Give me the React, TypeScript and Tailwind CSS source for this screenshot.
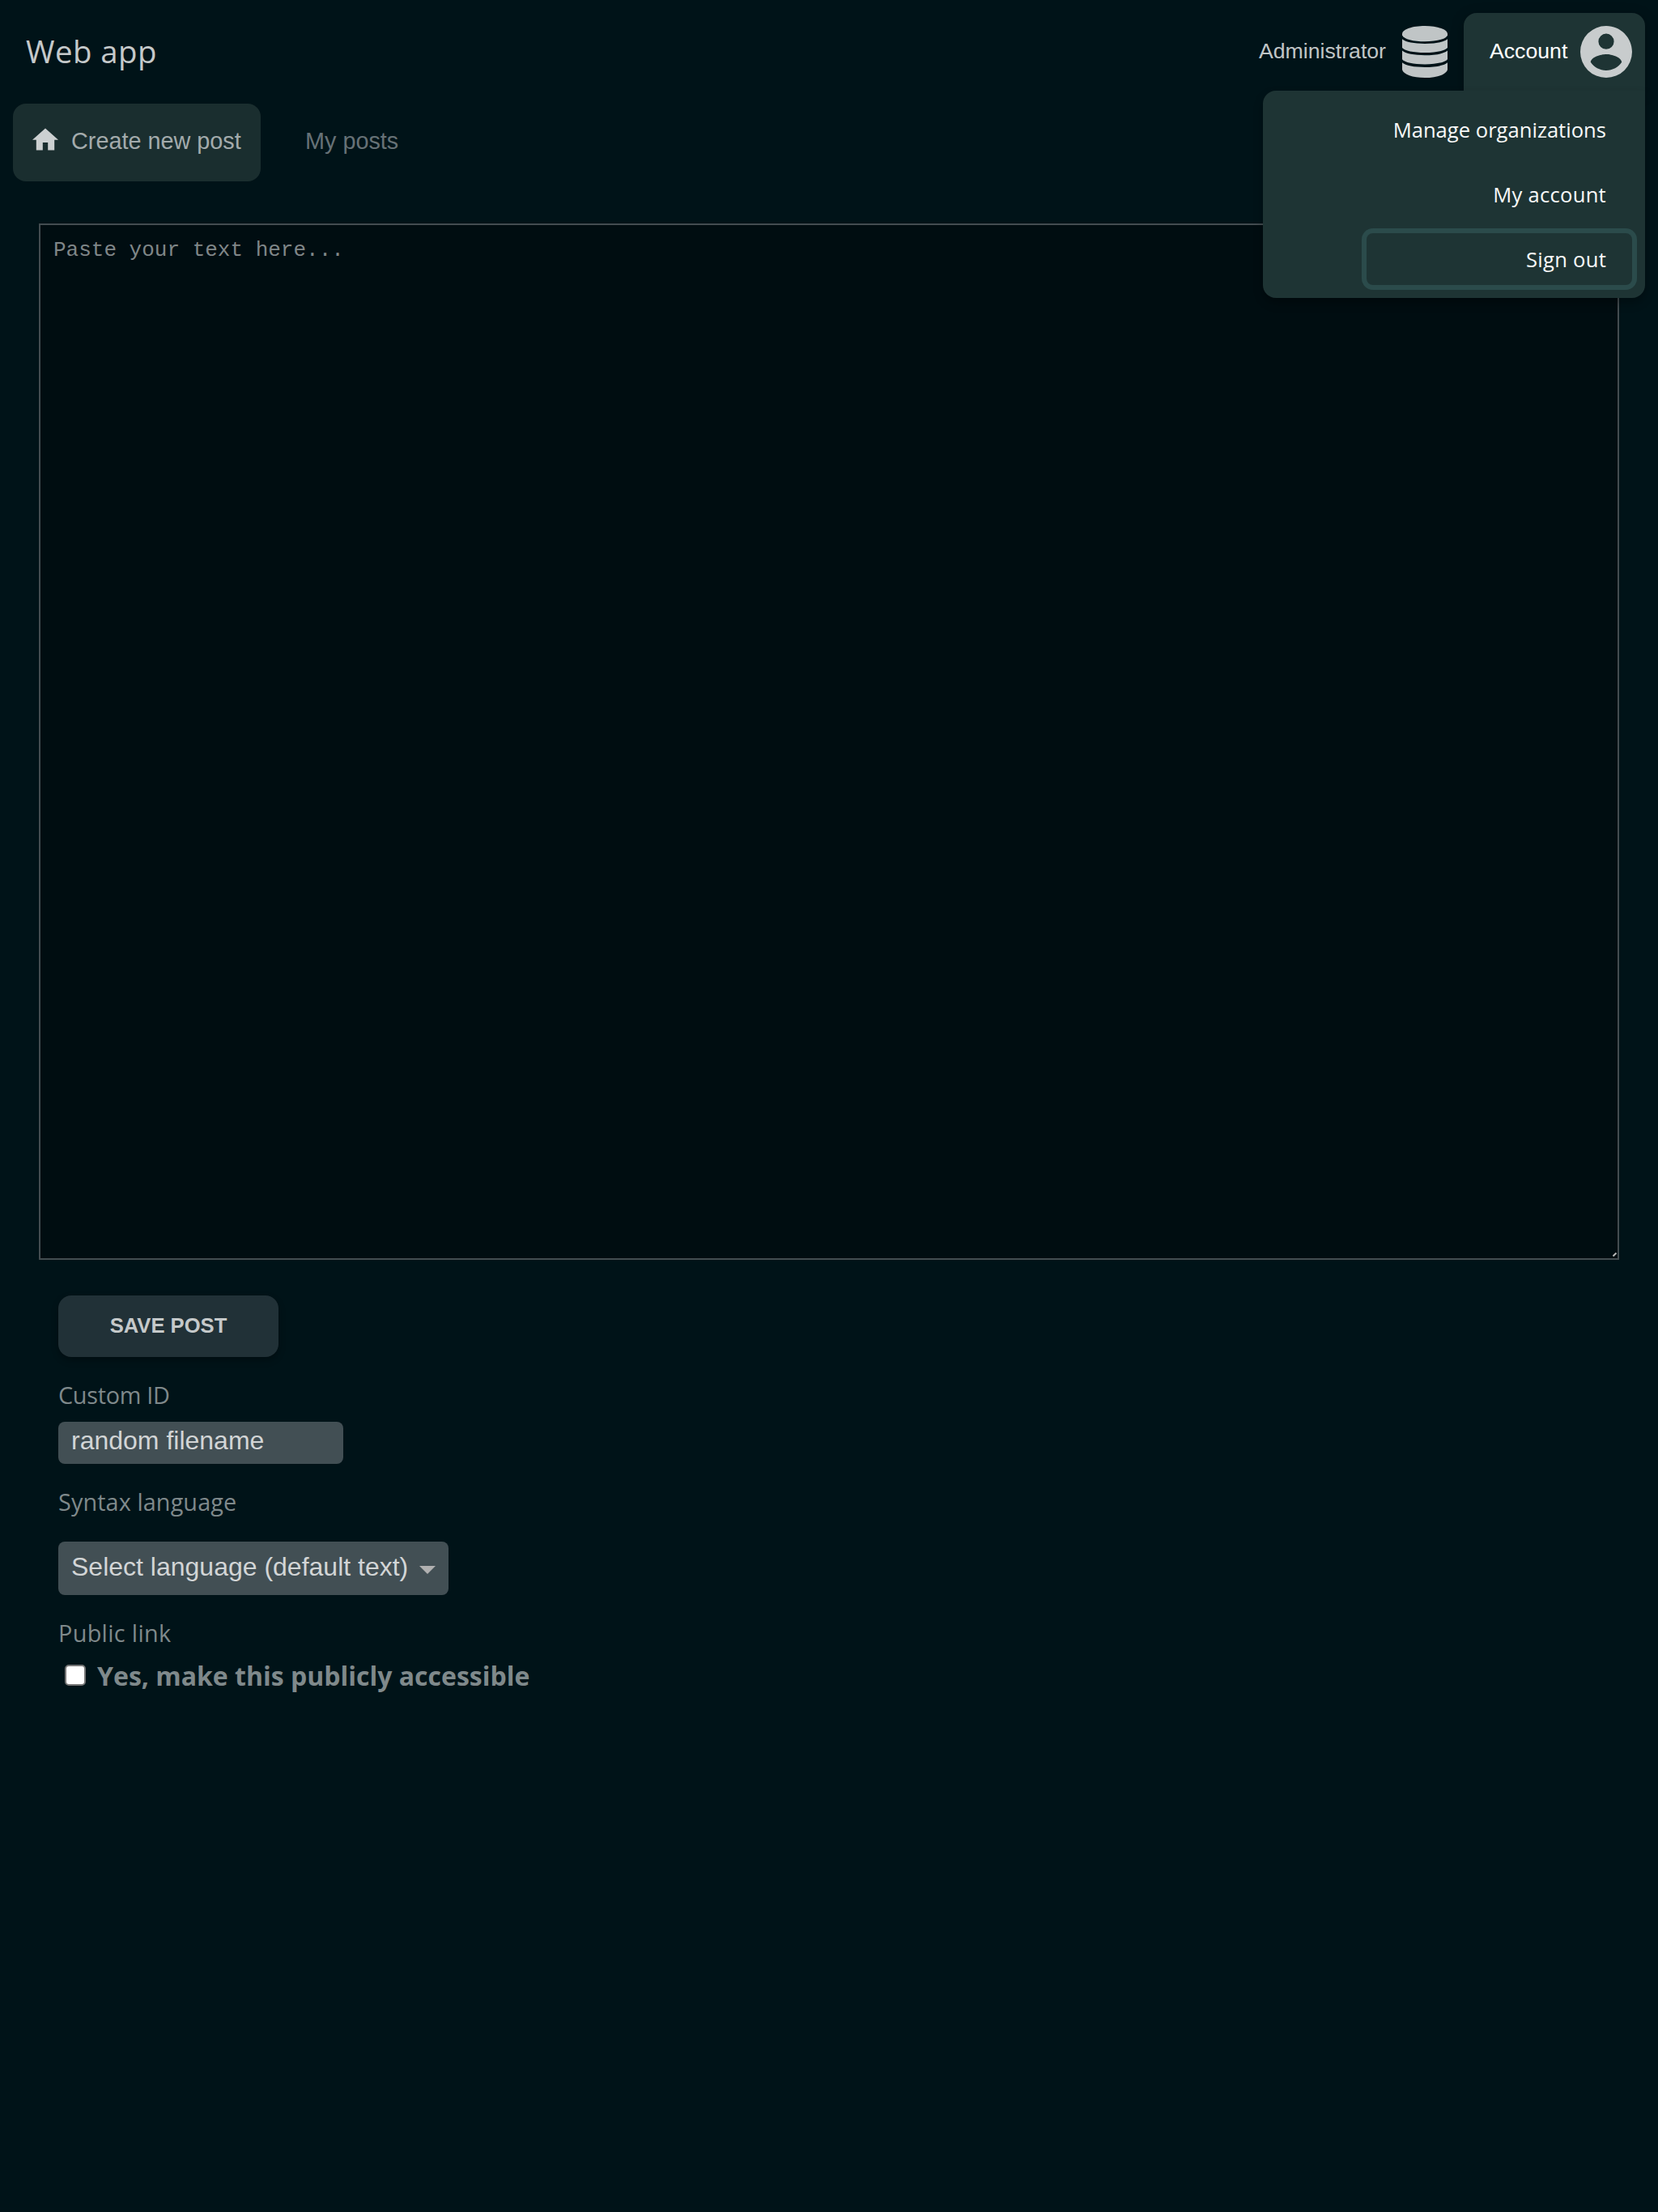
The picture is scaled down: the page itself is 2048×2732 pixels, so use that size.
import React from "react";

const DatabaseIcon = () => (
  <svg className="h-16 w-14 shrink-0" viewBox="0 0 56 64" fill="currentColor">
    <path d="M28 0C43 0 56 4 56 10V11.500C54 16.500 42 19.300 28 19.300S2 16.500 0 11.500V10C0 4 13 0 28 0Z" />
    <path d="M0 16.300C4 20 15 21.900 28 21.900S52 20 56 16.300V27C53 30.800 42 33 28 33S3 30.800 0 27Z" />
    <path d="M0 30.600C4 34.300 15 36.300 28 36.300S52 34.300 56 30.600V41.300C53 45.200 42 47.400 28 47.400S3 45.200 0 41.300Z" />
    <path d="M0 45.200C4 49 15 50.900 28 50.900S52 49 56 45.200V54C54.500 60 43 64 28 64S1.500 60 0 54Z" />
  </svg>
);

const AccountIcon = () => (
  <svg className="size-16 shrink-0" viewBox="2 2 20 20" fill="currentColor">
    <path d="M12,19.2C9.5,19.2 7.29,17.92 6,16C6.03,14 10,12.9 12,12.9C14,12.9 17.97,14 18,16C16.71,17.92 14.5,19.2 12,19.2M12,5A3,3 0 0,1 15,8A3,3 0 0,1 12,11A3,3 0 0,1 9,8A3,3 0 0,1 12,5M12,2A10,10 0 0,0 2,12A10,10 0 0,0 12,22A10,10 0 0,0 22,12C22,6.47 17.5,2 12,2Z" />
  </svg>
);

const HomeIcon = () => (
  <svg className="h-[28px] w-[32px] shrink-0" viewBox="2 3 20 17" fill="currentColor">
    <path d="M10 20v-6h4v6h5v-8h3L12 3 2 12h3v8z" />
  </svg>
);

const Label = ({ children, className }: { children: React.ReactNode; className: string }) => (
  <div className={`h-10 text-[28.8px] leading-[42px] text-[#7f898b] ${className}`}>{children}</div>
);

const menuItem =
  "flex h-16 w-[328px] items-center justify-end rounded-lg pt-[3px] pr-[32px] text-[25.6px] whitespace-nowrap text-[#f8f9f9]";

export default function App() {
  return (
    <div className="h-[2732px] w-[2048px] overflow-hidden bg-[#001318] font-['Open_Sans',sans-serif]">
      <header className="flex h-28 items-start justify-between pr-4 pl-8 pt-4">
        <h1 className="mt-4 h-16 text-[38.4px] leading-[63px] tracking-[0.45px] text-[#c5c9ca]">Web app</h1>
        <div className="flex font-['Liberation_Sans',sans-serif] text-[26.67px]">
          <button className="flex h-24 items-center pr-5 text-[#c0c5c6]">
            <span className="mr-[20px] pb-[3px]">Administrator</span>
            <DatabaseIcon />
          </button>
          <div className="relative">
            <button className="flex h-24 w-56 items-center justify-between rounded-t-2xl bg-[#1e3434] pr-4 pl-8 shadow-[0_4px_16px_rgba(0,0,0,0.3)]">
              <span className="pb-[3px] text-white">Account</span>
              <span className="text-[#c8cccd]">
                <AccountIcon />
              </span>
            </button>
            <div className="absolute top-24 right-0 z-10 flex h-64 w-[472px] flex-col items-end gap-4 rounded-2xl rounded-tr-none bg-[#1e3434] px-4 py-4 font-['Open_Sans',sans-serif] shadow-[0_6px_12px_rgba(0,0,0,0.3)]">
              <a className={menuItem}>Manage organizations</a>
              <a className={`${menuItem} tracking-[0.25px]`}>My account</a>
              <a className={`${menuItem} tracking-[0.25px] shadow-[0_0_0_6px_#2b4b4b]`}>Sign out</a>
            </div>
          </div>
        </div>
      </header>

      <nav className="mt-4 flex pl-4 font-['Liberation_Sans',sans-serif] text-[28.8px]">
        <a className="flex h-24 w-[306px] items-center rounded-2xl bg-[#1a2e2f] pl-6 text-[#a3abac]">
          <span className="mr-4 pb-[8px] text-[#ccd0d1]">
            <HomeIcon />
          </span>
          <span className="pb-[3px]">Create new post</span>
        </a>
        <a className="flex h-24 items-center pb-[3px] pl-[55px] text-[#667176]">My posts</a>
      </nav>

      <main className="px-12 pt-[52px]">
        <div className="relative h-[1280px]">
          <textarea
            className="block size-full resize-none border-2 border-[#434c50] bg-[#000d11] px-[16px] py-[16px] font-['Liberation_Mono',monospace] text-[26px] leading-[30px] outline-none placeholder:text-[#7f8688]"
            placeholder="Paste your text here..."
          />
          <svg className="absolute right-[3px] bottom-[4px] size-[5px]" viewBox="0 0 5 5" stroke="#b8b8b8" strokeWidth="2">
            <path d="M0.500 4.500L4.500 0.500" />
          </svg>
        </div>

        <form className="mt-11 flex flex-col items-start pl-6">
          <button
            type="button"
            className="h-[76px] w-[272px] rounded-2xl bg-[#213137] pb-px font-['Liberation_Sans',sans-serif] text-[25.6px] font-bold text-[#c5c9ca] shadow-[0_4px_8px_rgba(0,0,0,0.3)]"
          >
            SAVE POST
          </button>

          <Label className="mt-[26px] tracking-[-0.28px]">Custom ID</Label>
          <input
            className="mt-[14px] h-[52px] w-[352px] rounded-lg bg-[#424f54] px-4 pb-[6px] font-['Liberation_Sans',sans-serif] text-[32px] outline-none placeholder:text-[#d2d5d6]"
            placeholder="random filename"
          />

          <Label className="mt-[26px] tracking-[0.1px]">Syntax language</Label>
          <button
            type="button"
            className="mt-[30px] flex h-[66px] w-[482px] items-center justify-between rounded-lg bg-[#424f54] pr-4 pl-4 font-['Liberation_Sans',sans-serif] text-[32px] whitespace-nowrap text-[#d2d5d6]"
          >
            <span className="pb-[5px]">Select language (default text)</span>
            <svg className="mt-[4px] h-[10px] w-[20px]" viewBox="0 0 20 10" fill="#b0b0b0">
              <path d="M0 0H20L10 10Z" />
            </svg>
          </button>

          <Label className="mt-[26px] tracking-[0.34px]">Public link</Label>
          <label className="mt-[13px] flex h-10 items-center pl-2 text-[32px] font-bold text-[#7f898b]">
            <span className="mr-[14px] size-[26px] rounded-[5px] border-2 border-[#767676] bg-white" />
            <span className="pt-[2px]">Yes, make this publicly accessible</span>
          </label>
        </form>
      </main>
    </div>
  );
}
